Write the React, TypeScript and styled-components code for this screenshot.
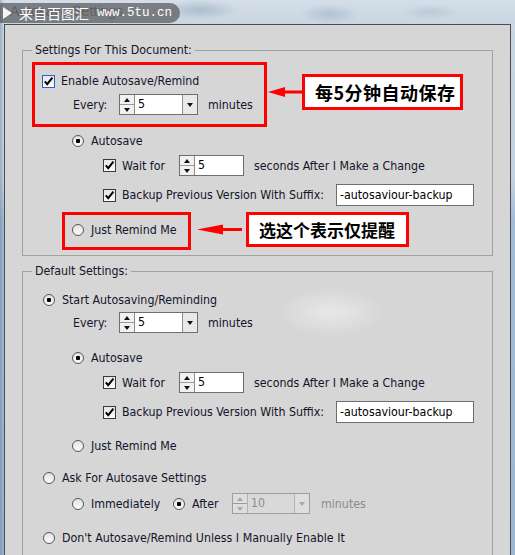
import React from 'react';
import styled, { createGlobalStyle } from 'styled-components';

const GlobalStyle = createGlobalStyle`
  html, body {
    margin: 0;
    padding: 0;
  }
  body {
    width: 515px;
    height: 555px;
    overflow: hidden;
    font-family: "DejaVu Sans Condensed", "DejaVu Sans", sans-serif;
  }
`;

const ui = `"DejaVu Sans Condensed", "DejaVu Sans", sans-serif`;
const cjk = `"Noto Sans CJK SC", "Noto Sans", sans-serif`;

export default function App() {
  return (
    <>
      <GlobalStyle />
      <Desktop>
        <TitleBar>Autosave Settings</TitleBar>
        <Watermark>
          <PlayMark />
          <WmCjk>来自百图汇</WmCjk>
          <WmUrl>www.5tu.cn</WmUrl>
        </Watermark>

        <Dialog>
          <Group $mt={25} $pb={5}>
            <Legend>Settings For This Document:</Legend>

            <Highlight $w={235} $ml={9} $mt={11} $pad="3px 0 9px 0">
              <Row $indent={7} $mt={3}>
                <Check checked focused />
                <Label>Enable Autosave/Remind</Label>
              </Row>
              <Row $indent={38} $mt={3} $h={21}>
                <Label $w={46}>Every:</Label>
                <Spinner value="5" width={79} dropdown />
                <Label $ml={10}>minutes</Label>
              </Row>
            </Highlight>

            <Row $indent={49} $mt={4}>
              <Radio checked />
              <Label>Autosave</Label>
            </Row>
            <Row $indent={80} $mt={4} $h={21}>
              <Check checked />
              <Label $w={57}>Wait for</Label>
              <Spinner value="5" width={65} />
              <Label $ml={10}>seconds After I Make a Change</Label>
            </Row>
            <Row $indent={80} $mt={8} $h={22}>
              <Check checked />
              <Label $w={214}>Backup Previous Version With Suffix:</Label>
              <TextField>-autosaviour-backup</TextField>
            </Row>

            <Highlight $w={129} $ml={39} $mt={6} $pad="5px 0 7px 0">
              <Row $indent={7} $mt={0}>
                <Radio />
                <Label>Just Remind Me</Label>
              </Row>
            </Highlight>
          </Group>

          <Group $mt={15} $pb={30} $glow>
            <Legend>Default Settings:</Legend>

            <Row $indent={20} $mt={18}>
              <Radio checked />
              <Label>Start Autosaving/Reminding</Label>
            </Row>
            <Row $indent={50} $mt={2} $h={21}>
              <Label $w={46}>Every:</Label>
              <Spinner value="5" width={79} dropdown />
              <Label $ml={10}>minutes</Label>
            </Row>
            <Row $indent={49} $mt={15}>
              <Radio checked />
              <Label>Autosave</Label>
            </Row>
            <Row $indent={80} $mt={4} $h={21}>
              <Check checked />
              <Label $w={57}>Wait for</Label>
              <Spinner value="5" width={65} />
              <Label $ml={10}>seconds After I Make a Change</Label>
            </Row>
            <Row $indent={80} $mt={8} $h={22}>
              <Check checked />
              <Label $w={214}>Backup Previous Version With Suffix:</Label>
              <TextField>-autosaviour-backup</TextField>
            </Row>
            <Row $indent={49} $mt={13}>
              <Radio />
              <Label>Just Remind Me</Label>
            </Row>
            <Row $indent={20} $mt={12}>
              <Radio />
              <Label>Ask For Autosave Settings</Label>
            </Row>
            <Row $indent={49} $mt={5} $h={21}>
              <Radio />
              <Label $w={82}>Immediately</Label>
              <Radio checked />
              <Label $w={40}>After</Label>
              <Spinner value="10" width={78} dropdown disabled />
              <Label $ml={11} $muted>minutes</Label>
            </Row>
            <Row $indent={20} $mt={14}>
              <Radio />
              <Label>Don't Autosave/Remind Unless I Manually Enable It</Label>
            </Row>
          </Group>

          {/* annotations drawn over the dialog */}
          <Callout style={{ left: 263, top: 49 }}>
            <Arrow width={35} height={36} head={17} />
            <CalloutBox $w={161} $h={36} $spacing={0.5} $size={18}>每5分钟自动保存</CalloutBox>
          </Callout>
          <Callout style={{ left: 192, top: 187 }}>
            <Arrow width={50} height={35} head={26} gap={5} />
            <CalloutBox $w={163} $h={35} $spacing={0} $size={17}>选这个表示仅提醒</CalloutBox>
          </Callout>
        </Dialog>
      </Desktop>
    </>
  );
}

function Check({ checked, focused }: { checked?: boolean; focused?: boolean }) {
  return (
    <CheckBox $focused={focused}>
      {checked && (
        <svg width="11" height="11" viewBox="0 0 11 11">
          <path d="M1.8 5.4 L4.2 8.2 L9.4 1.6" fill="none" stroke="#000" strokeWidth="2" />
        </svg>
      )}
    </CheckBox>
  );
}

function Radio({ checked }: { checked?: boolean }) {
  return <RadioDot $checked={checked} />;
}

function Spinner({ value, width, dropdown, disabled }: {
  value: string; width: number; dropdown?: boolean; disabled?: boolean;
}) {
  return (
    <SpinBox $w={width} $disabled={disabled}>
      <Steps $disabled={disabled}>
        <Step><Tri $dir="up" $disabled={disabled} /></Step>
        <Step><Tri $dir="down" $disabled={disabled} /></Step>
      </Steps>
      <SpinValue $disabled={disabled}>{value}</SpinValue>
      {dropdown && (
        <DropButton $disabled={disabled}>
          <Tri $dir="down" $disabled={disabled} />
        </DropButton>
      )}
    </SpinBox>
  );
}

function Arrow({ width, height, head, gap = 0 }: { width: number; height: number; head: number; gap?: number }) {
  const y = height / 2;
  return (
    <svg width={width} height={height} style={{ flex: 'none', marginRight: -1 }}>
      <polygon points={`0,${y} ${head},${y - 5} ${head},${y + 5}`} fill="#f00" />
      <rect x={head - 1} y={y - 1.5} width={width - head - gap + 1} height={3} fill="#f00" />
    </svg>
  );
}

// --- Styled Components ---

const Desktop = styled.div`
  position: relative;
  width: 515px;
  height: 555px;
  overflow: hidden;
  background:
    linear-gradient(90deg, rgba(80, 100, 125, 0.35) 0px, transparent 4px),
    radial-gradient(ellipse 40px 10px at 200px 10px, rgba(150, 170, 190, 0.6), transparent),
    radial-gradient(ellipse 30px 10px at 330px 14px, rgba(150, 170, 190, 0.5), transparent),
    radial-gradient(ellipse 30px 8px at 430px 12px, rgba(170, 185, 200, 0.5), transparent),
    linear-gradient(180deg, #d5dee8 0px, #c9d6e3 24px, #c3d2e0 180px, #a2bcd8 220px, #9db7d3 555px);
`;

const TitleBar = styled.div`
  height: 24px;
  padding-left: 10px;
  line-height: 22px;
  font-family: "Liberation Sans", sans-serif;
  font-size: 14px;
  color: rgba(70, 70, 70, 0.55);
`;

const Watermark = styled.div`
  position: absolute;
  top: 3px;
  left: -10px;
  height: 20px;
  padding: 0 8px 0 13px;
  display: flex;
  align-items: center;
  border-radius: 10px;
  background: rgba(70, 70, 70, 0.62);
  color: #fff;
`;

const PlayMark = styled.span`
  width: 0;
  height: 0;
  border-left: 9px solid #f4f4f4;
  border-top: 6px solid transparent;
  border-bottom: 6px solid transparent;
  margin-right: 7px;
`;

const WmCjk = styled.span`
  font-family: ${cjk};
  font-size: 14px;
  line-height: 20px;
  margin-right: 8px;
`;

const WmUrl = styled.span`
  font-family: "Liberation Mono", monospace;
  font-size: 12.5px;
  line-height: 20px;
`;

const Dialog = styled.div`
  position: relative;
  margin-left: 4px;
  width: 507px;
  height: 531px;
  box-sizing: border-box;
  border: 1px solid #4c4c4c;
  border-bottom: none;
  background: #d6d6d6;
  padding: 0 17px;
  overflow: hidden;
`;

const Group = styled.div<{ $mt: number; $pb: number; $glow?: boolean }>`
  position: relative;
  margin-top: ${p => p.$mt}px;
  padding-bottom: ${p => p.$pb}px;
  border: 1px solid #a2a2a2;
  background: ${p => p.$glow
    ? 'radial-gradient(ellipse 55px 24px at 308px 40px, rgba(255,255,255,0.45), transparent)'
    : 'none'};
`;

/* caption sits on the group's top border */
const Legend = styled.div`
  position: absolute;
  top: -8px;
  left: 9px;
  padding: 0 3px;
  background: #d6d6d6;
  line-height: 14px;
  font-family: ${ui};
  font-size: 12.3px;
  color: #14142a;
`;

const Highlight = styled.div<{ $w: number; $ml: number; $mt: number; $pad: string }>`
  box-sizing: border-box;
  width: ${p => p.$w}px;
  margin: ${p => p.$mt}px 0 0 ${p => p.$ml}px;
  padding: ${p => p.$pad};
  border: 3px solid #ff0000;
`;

const Row = styled.div<{ $indent: number; $mt: number; $h?: number }>`
  display: flex;
  align-items: center;
  height: ${p => p.$h ?? 20}px;
  margin-top: ${p => p.$mt}px;
  padding-left: ${p => p.$indent}px;
`;

const Label = styled.span<{ $w?: number; $ml?: number; $muted?: boolean }>`
  flex: none;
  ${p => p.$w ? `width: ${p.$w}px;` : ''}
  margin-left: ${p => p.$ml ?? 0}px;
  font-family: ${ui};
  font-size: 12.3px;
  line-height: 16px;
  white-space: nowrap;
  color: ${p => p.$muted ? '#8c8c8c' : '#14142a'};
`;

const CheckBox = styled.span<{ $focused?: boolean }>`
  flex: none;
  box-sizing: border-box;
  width: 13px;
  height: 13px;
  margin-right: 6px;
  display: flex;
  align-items: center;
  justify-content: center;
  border: 1px solid ${p => p.$focused ? '#2b5fd9' : '#3a3a3a'};
  background: linear-gradient(180deg, #e6e6e6, #fbfbfb);
`;

const RadioDot = styled.span<{ $checked?: boolean }>`
  flex: none;
  box-sizing: border-box;
  width: 12px;
  height: 12px;
  margin-right: 7px;
  border-radius: 50%;
  border: 1px solid #555;
  background: ${p => p.$checked
    ? 'radial-gradient(circle, #000 0 2px, transparent 2.5px), linear-gradient(180deg, #e2e2e2, #fdfdfd)'
    : 'linear-gradient(180deg, #e2e2e2, #fdfdfd)'};
`;

const SpinBox = styled.div<{ $w: number; $disabled?: boolean }>`
  flex: none;
  display: flex;
  box-sizing: border-box;
  width: ${p => p.$w}px;
  height: 21px;
  border: 1px solid ${p => p.$disabled ? '#9e9e9e' : '#6e6e6e'};
  background: ${p => p.$disabled ? '#d9d9d9' : '#fff'};
`;

const Steps = styled.div<{ $disabled?: boolean }>`
  width: 14px;
  display: flex;
  flex-direction: column;
  border-right: 1px solid ${p => p.$disabled ? '#b4b4b4' : '#8c8c8c'};
  background: ${p => p.$disabled ? '#dedede' : '#f1f1f1'};
`;

const Step = styled.div`
  flex: 1;
  display: flex;
  align-items: center;
  justify-content: center;

  & + & {
    border-top: 1px solid #9a9a9a;
  }
`;

const Tri = styled.span<{ $dir: 'up' | 'down'; $disabled?: boolean }>`
  width: 0;
  height: 0;
  border-left: 3.5px solid transparent;
  border-right: 3.5px solid transparent;
  ${p => p.$dir === 'up' ? 'border-bottom' : 'border-top'}: 4px solid ${p => p.$disabled ? '#a8a8a8' : '#111'};
`;

const SpinValue = styled.span<{ $disabled?: boolean }>`
  flex: 1;
  padding-left: 3px;
  font-family: ${ui};
  font-size: 12.3px;
  line-height: 19px;
  color: ${p => p.$disabled ? '#8c8c8c' : '#000'};
`;

const DropButton = styled.div<{ $disabled?: boolean }>`
  width: 14px;
  display: flex;
  align-items: center;
  justify-content: center;
  border-left: 1px solid ${p => p.$disabled ? '#b4b4b4' : '#8c8c8c'};
  background: ${p => p.$disabled ? '#dedede' : '#e9e9e9'};
`;

const TextField = styled.div`
  flex: none;
  box-sizing: border-box;
  width: 138px;
  height: 22px;
  padding-left: 3px;
  border: 1px solid #6e6e6e;
  background: #fff;
  font-family: ${ui};
  font-size: 12.3px;
  line-height: 20px;
  color: #000;
  white-space: nowrap;
  overflow: hidden;
`;

const Callout = styled.div`
  position: absolute;
  display: flex;
  align-items: center;
`;

const CalloutBox = styled.div<{ $w: number; $h: number; $spacing: number; $size: number }>`
  box-sizing: border-box;
  width: ${p => p.$w}px;
  height: ${p => p.$h}px;
  padding-left: 10px;
  display: flex;
  align-items: center;
  border: 3px solid #ff0000;
  background: #fff;
  font-family: ${cjk};
  font-weight: 700;
  font-size: ${p => p.$size}px;
  letter-spacing: ${p => p.$spacing}px;
  color: #000;
  white-space: nowrap;
`;
